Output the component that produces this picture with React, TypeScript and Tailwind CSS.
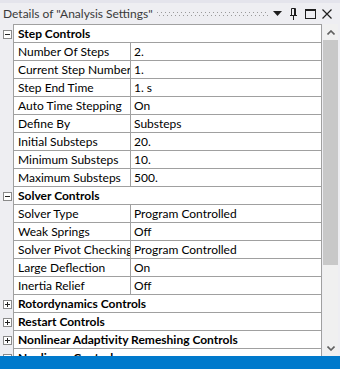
import React from 'react';

type Row =
  | { kind: 'group'; label: string; open: boolean }
  | { kind: 'prop'; name: string; value: string };

const rows: Row[] = [
  { kind: 'group', label: 'Step Controls', open: true },
  { kind: 'prop', name: 'Number Of Steps', value: '2.' },
  { kind: 'prop', name: 'Current Step Number', value: '1.' },
  { kind: 'prop', name: 'Step End Time', value: '1. s' },
  { kind: 'prop', name: 'Auto Time Stepping', value: 'On' },
  { kind: 'prop', name: 'Define By', value: 'Substeps' },
  { kind: 'prop', name: 'Initial Substeps', value: '20.' },
  { kind: 'prop', name: 'Minimum Substeps', value: '10.' },
  { kind: 'prop', name: 'Maximum Substeps', value: '500.' },
  { kind: 'group', label: 'Solver Controls', open: true },
  { kind: 'prop', name: 'Solver Type', value: 'Program Controlled' },
  { kind: 'prop', name: 'Weak Springs', value: 'Off' },
  { kind: 'prop', name: 'Solver Pivot Checking', value: 'Program Controlled' },
  { kind: 'prop', name: 'Large Deflection', value: 'On' },
  { kind: 'prop', name: 'Inertia Relief', value: 'Off' },
  { kind: 'group', label: 'Rotordynamics Controls', open: false },
  { kind: 'group', label: 'Restart Controls', open: false },
  { kind: 'group', label: 'Nonlinear Adaptivity Remeshing Controls', open: false },
  { kind: 'group', label: 'Nonlinear Controls', open: false },
];

function Expander({ open }: { open: boolean }) {
  return (
    <svg width="9" height="9" viewBox="0 0 9 9" className="block">
      <rect x="0.5" y="0.5" width="8" height="8" fill="#fff" stroke="#8a8a8a" />
      <line x1="2" y1="4.5" x2="7" y2="4.5" stroke="#222" />
      {!open && <line x1="4.5" y1="2" x2="4.5" y2="7" stroke="#222" />}
    </svg>
  );
}

function Grip() {
  return (
    <svg width="120" height="5" className="block">
      <defs>
        <pattern id="dots" width="4" height="4" patternUnits="userSpaceOnUse">
          <rect x="0" y="0" width="1" height="1" fill="#9a9a9a" />
          <rect x="2" y="3" width="1" height="1" fill="#9a9a9a" />
        </pattern>
      </defs>
      <rect x="0" y="0" width="120" height="4" fill="url(#dots)" />
    </svg>
  );
}

export default function App() {
  return (
    <div
      className="w-[340px] h-[369px] overflow-hidden flex flex-col bg-[#eeeef2] text-black"
      style={{ fontFamily: 'Lato, "Liberation Sans", sans-serif' }}
    >
      {/* title bar */}
      <div className="h-[24px] shrink-0 flex items-center border-t-[3px] border-[#e4e4ec] pl-[3px] pr-[8px]">
        <span className="text-[12px] leading-none text-[#3a3a3a] whitespace-nowrap">
          Details of "Analysis Settings"
        </span>
        <div className="ml-[4px] flex-1 min-w-0 overflow-hidden pt-[1px]">
          <Grip />
        </div>
        <div className="flex items-center ml-[5px]">
          <svg width="9" height="5" viewBox="0 0 9 5">
            <path d="M0 0H9L4.5 5Z" fill="#1e1e1e" />
          </svg>
          <svg width="7" height="12" viewBox="0 0 7 12" className="ml-[8px]">
            <path d="M1.5 0.5H5.5V7.5M1.5 0.5V7.5M0 7.5H7M3.5 7.5V12" stroke="#1e1e1e" fill="none" />
            <rect x="4" y="1" width="1.5" height="6" fill="#1e1e1e" />
          </svg>
          <svg width="11" height="10" viewBox="0 0 11 10" className="ml-[8px]">
            <rect x="0.5" y="0.5" width="10" height="9" fill="none" stroke="#1e1e1e" />
            <rect x="0" y="0" width="11" height="2" fill="#1e1e1e" />
          </svg>
          <svg width="10" height="10" viewBox="0 0 10 10" className="ml-[6px]">
            <path d="M0.5 0.5L9.5 9.5M9.5 0.5L0.5 9.5" stroke="#1e1e1e" strokeWidth="1.2" />
          </svg>
        </div>
      </div>

      {/* body */}
      <div className="flex-1 min-h-0 flex">
        <div className="w-[322px] overflow-hidden">
          <div className="border-t border-[#a0a0a0] ml-[13px] w-[309px]" />
          {rows.map((r, i) =>
            r.kind === 'group' ? (
              <div key={i} className="flex h-[18px]">
                <div className="w-[13px] shrink-0 flex items-center justify-center pl-[2px]">
                  <Expander open={r.open} />
                </div>
                <div className="w-[309px] bg-white border-l border-r border-b border-[#a0a0a0] flex items-center pl-[4px] text-[12px] font-bold whitespace-nowrap">
                  {r.label}
                </div>
              </div>
            ) : (
              <div key={i} className="flex h-[18px]">
                <div className="w-[13px] shrink-0" />
                <div className="w-[118px] bg-white border-l border-b border-r border-[#a0a0a0] flex items-center pl-[4px] text-[12px] whitespace-nowrap overflow-hidden">
                  {r.name}
                </div>
                <div className="w-[191px] bg-white border-b border-r border-[#a0a0a0] flex items-center pl-[3px] text-[12px] whitespace-nowrap overflow-hidden">
                  {r.value}
                </div>
              </div>
            )
          )}
        </div>
        <div className="w-[1px]" />
        <div className="w-[15px] bg-[#f0f0f0] flex flex-col items-center">
          <div className="h-[16px] flex items-center justify-center">
            <svg width="8" height="5" viewBox="0 0 8 5">
              <path d="M0.5 4.5L4 1L7.5 4.5" stroke="#606060" strokeWidth="1.6" fill="none" />
            </svg>
          </div>
          <div className="w-[15px] h-[225px] bg-[#c8c8c8]" />
          <div className="flex-1" />
          <div className="h-[16px] flex items-center justify-center">
            <svg width="8" height="5" viewBox="0 0 8 5">
              <path d="M0.5 0.5L4 4L7.5 0.5" stroke="#606060" strokeWidth="1.6" fill="none" />
            </svg>
          </div>
        </div>
        <div className="w-[2px]" />
      </div>

      {/* status bar */}
      <div className="h-[13px] shrink-0 bg-[#007acc]" />
    </div>
  );
}
